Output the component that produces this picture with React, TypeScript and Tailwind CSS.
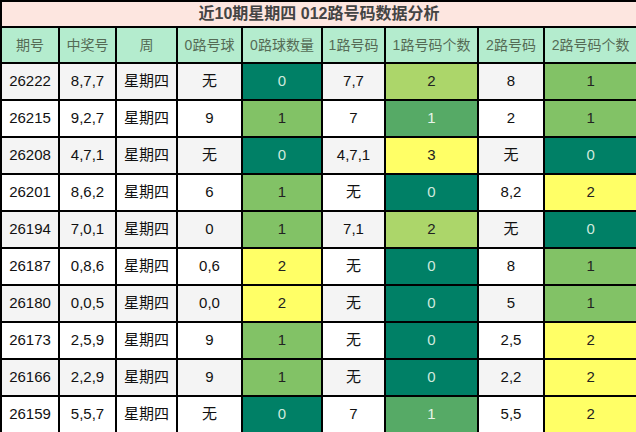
import React from "react";

type Tone = "D" | "G" | "L" | "Y" | "M";

const tone: Record<Tone, string> = {
  D: "bg-[#008066] text-[#cfe9de]",
  G: "bg-[#82c266] text-[#222]",
  L: "bg-[#acd66a] text-[#222]",
  Y: "bg-[#ffff66] text-[#222]",
  M: "bg-[#56aa66] text-[#e8f5ea]",
};

const headers = ["期号", "中奖号", "周", "0路号球", "0路球数量", "1路号码", "1路号码个数", "2路号码", "2路号码个数"];
const widths = [58, 57, 61, 65, 80, 63, 93, 66, 93];

// [期号, 中奖号, 0路号球, 0路数量, 1路号码, 1路个数, 2路号码, 2路个数]
const rows: [string, string, string, string, Tone, string, string, Tone, string, string, Tone][] = [
  ["26222", "8,7,7", "无", "0", "D", "7,7", "2", "L", "8", "1", "G"],
  ["26215", "9,2,7", "9", "1", "G", "7", "1", "M", "2", "1", "G"],
  ["26208", "4,7,1", "无", "0", "D", "4,7,1", "3", "Y", "无", "0", "D"],
  ["26201", "8,6,2", "6", "1", "G", "无", "0", "D", "8,2", "2", "Y"],
  ["26194", "7,0,1", "0", "1", "G", "7,1", "2", "L", "无", "0", "D"],
  ["26187", "0,8,6", "0,6", "2", "Y", "无", "0", "D", "8", "1", "G"],
  ["26180", "0,0,5", "0,0", "2", "Y", "无", "0", "D", "5", "1", "G"],
  ["26173", "2,5,9", "9", "1", "G", "无", "0", "D", "2,5", "2", "Y"],
  ["26166", "2,2,9", "9", "1", "G", "无", "0", "D", "2,2", "2", "Y"],
  ["26159", "5,5,7", "无", "0", "D", "7", "1", "M", "5,5", "2", "Y"],
];

export default function App() {
  const font = { fontFamily: '"Liberation Sans", "Noto Sans CJK SC", sans-serif' };
  return (
    <div className="w-[636px] h-[432px] bg-white" style={font}>
      <table className="w-[636px] table-fixed border-collapse border-2 border-black text-[15px] text-[#111]">
        <colgroup>
          {widths.map((w, i) => (
            <col key={i} style={{ width: w }} />
          ))}
        </colgroup>
        <thead>
          <tr className="h-[26px]">
            <th colSpan={9} className="border-2 border-black bg-[#fde6e0] text-[16px] font-bold text-[#444] leading-none">
              近10期星期四 012路号码数据分析
            </th>
          </tr>
          <tr className="h-[36px] bg-[#b4ecce]">
            {headers.map((h) => (
              <th key={h} className="border-2 border-black font-normal text-[14px] text-[#556b55] whitespace-nowrap">
                {h}
              </th>
            ))}
          </tr>
        </thead>
        <tbody>
          {rows.map((r, i) => {
            const base = i % 2 === 0 ? "bg-[#f4f4f4]" : "bg-white";
            const cell = "border-2 border-black text-center";
            return (
              <tr key={r[0]} className={`h-[37px] ${base}`}>
                <td className={cell}>{r[0]}</td>
                <td className={cell}>{r[1]}</td>
                <td className={cell}>星期四</td>
                <td className={cell}>{r[2]}</td>
                <td className={`${cell} ${tone[r[4]]}`}>{r[3]}</td>
                <td className={cell}>{r[5]}</td>
                <td className={`${cell} ${tone[r[7]]}`}>{r[6]}</td>
                <td className={cell}>{r[8]}</td>
                <td className={`${cell} ${tone[r[10]]}`}>{r[9]}</td>
              </tr>
            );
          })}
        </tbody>
      </table>
    </div>
  );
}
